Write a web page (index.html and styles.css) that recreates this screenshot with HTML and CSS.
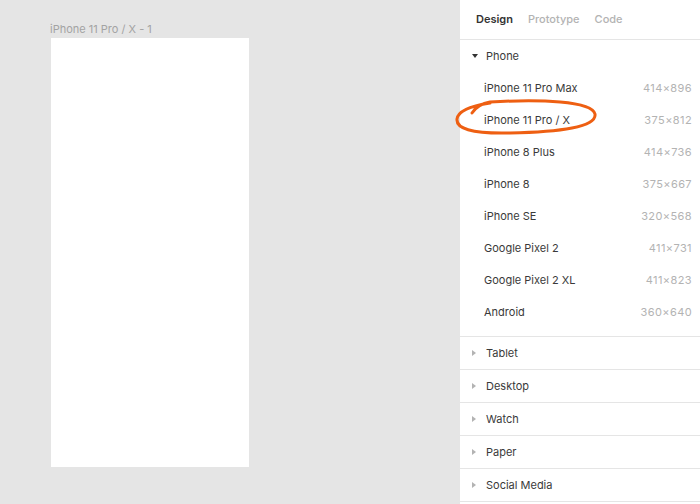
FILE: index.html
```html
<!DOCTYPE html>
<html>
<head>
<meta charset="utf-8">
<link rel="stylesheet" href="styles.css">
</head>
<body>
<div class="app">
  <div class="canvas">
    <div class="frame-label">iPhone 11 Pro / X - 1</div>
    <div class="frame"></div>
  </div>
  <div class="panel">
    <div class="tabs">
      <span class="tab active">Design</span>
      <span class="tab">Prototype</span>
      <span class="tab">Code</span>
    </div>
    <div class="section open">
      <div class="section-head"><span class="tri down"></span><span>Phone</span></div>
      <div class="item"><span>iPhone 11 Pro Max</span><span class="dim">414×896</span></div>
      <div class="item"><span>iPhone 11 Pro / X</span><span class="dim">375×812</span></div>
      <div class="item"><span>iPhone 8 Plus</span><span class="dim">414×736</span></div>
      <div class="item"><span>iPhone 8</span><span class="dim">375×667</span></div>
      <div class="item"><span>iPhone SE</span><span class="dim">320×568</span></div>
      <div class="item"><span>Google Pixel 2</span><span class="dim">411×731</span></div>
      <div class="item"><span>Google Pixel 2 XL</span><span class="dim">411×823</span></div>
      <div class="item"><span>Android</span><span class="dim">360×640</span></div>
    </div>
    <div class="section"><div class="section-head"><span class="tri right"></span><span>Tablet</span></div></div>
    <div class="section"><div class="section-head"><span class="tri right"></span><span>Desktop</span></div></div>
    <div class="section"><div class="section-head"><span class="tri right"></span><span>Watch</span></div></div>
    <div class="section"><div class="section-head"><span class="tri right"></span><span>Paper</span></div></div>
    <div class="section"><div class="section-head"><span class="tri right"></span><span>Social Media</span></div></div>
  </div>
  <svg class="annotation" width="700" height="504" viewBox="0 0 700 504">
    <path d="M 472 113 Q 478 104 490 102 C 540 99 592 101 595 114 C 597 127 560 132 510 133 C 470 134 456 128 457 119 C 458 111 470 106 490 103" fill="none" stroke="#ee5f12" stroke-width="3" stroke-linecap="round" stroke-linejoin="round"/>
  </svg>
</div>
</body>
</html>
```
FILE: styles.css
```css
* { box-sizing: border-box; }
html, body { margin: 0; padding: 0; }
body {
  font-family: Inter, "Noto Sans", sans-serif;
  font-size: 11px;
  color: #3a3a3a;
  overflow: hidden;
}
.app {
  position: relative;
  display: flex;
  width: 700px;
  height: 504px;
}
.canvas {
  flex: 1;
  background: #e5e5e5;
  padding: 22px 0 0 50px;
}
.frame-label {
  line-height: 14px;
  color: #a3a3a3;
  height: 16px;
}
.frame {
  margin-left: 1px;
  width: 198px;
  height: 429px;
  background: #fff;
}
.panel {
  width: 240px;
  background: #fff;
}
.tabs {
  display: flex;
  gap: 15px;
  height: 40px;
  align-items: center;
  padding-left: 16px;
  padding-bottom: 1px;
  border-bottom: 1px solid #e5e5e5;
}
.tab { color: #b3b3b3; font-weight: 500; }
.tab.active { color: #333; font-weight: 600; }
.section { border-bottom: 1px solid #e5e5e5; }
.section.open { padding-bottom: 8px; }
.section-head {
  display: flex;
  align-items: center;
  height: 32px;
  padding-left: 11px;
}
.tri {
  width: 0;
  height: 0;
}
.tri.down {
  border-left: 3px solid transparent;
  border-right: 3px solid transparent;
  border-top: 4px solid #333;
  margin-left: 1px;
  margin-right: 8px;
}
.tri.right {
  border-top: 3px solid transparent;
  border-bottom: 3px solid transparent;
  border-left: 4px solid #b3b3b3;
  margin-left: 1px;
  margin-right: 10px;
}
.item {
  display: flex;
  justify-content: space-between;
  align-items: center;
  height: 32px;
  padding: 0 8px 0 24px;
}
.dim { color: #b3b3b3; letter-spacing: 0.4px; }
.annotation {
  position: absolute;
  left: 0;
  top: 0;
  pointer-events: none;
}
```
